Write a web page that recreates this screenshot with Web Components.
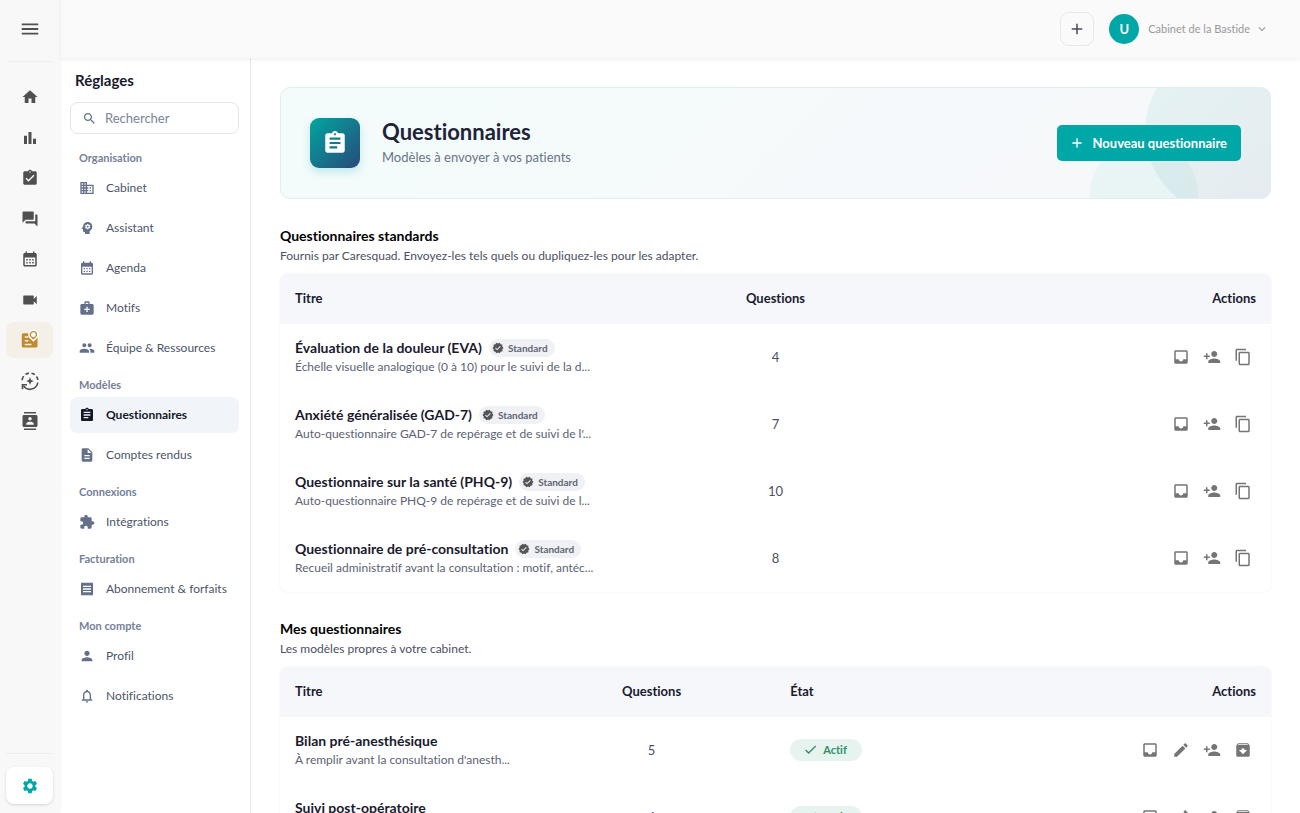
<!DOCTYPE html>
<html lang="fr">
<head>
<meta charset="utf-8">
<meta name="viewport" content="width=device-width, initial-scale=1">
<title>Questionnaires</title>
<style>
  html, body {
    margin: 0;
    height: 100%;
  }
  body {
    --teal: #00a7a7;
    --ink: #1a1a2e;
    --muted: #64708a;
    font-family: Lato, "Open Sans", sans-serif;
    font-size: 13px;
    font-variant-ligatures: none;
    line-height: 20px;
    color: var(--ink);
    background: #fff;
    overflow: hidden;
  }
</style>
</head>
<body>
<cs-app>
  <cs-rail slot="rail"></cs-rail>
  <cs-topbar slot="top" initial="U">Cabinet de la Bastide</cs-topbar>
  <cs-settings slot="nav">
    <cs-group label="Organisation">
      <cs-link icon="business">Cabinet</cs-link>
      <cs-link icon="psychology">Assistant</cs-link>
      <cs-link icon="calendar">Agenda</cs-link>
      <cs-link icon="medical">Motifs</cs-link>
      <cs-link icon="people">Équipe &amp; Ressources</cs-link>
    </cs-group>
    <cs-group label="Modèles">
      <cs-link icon="assignment" active>Questionnaires</cs-link>
      <cs-link icon="description">Comptes rendus</cs-link>
    </cs-group>
    <cs-group label="Connexions">
      <cs-link icon="extension">Intégrations</cs-link>
    </cs-group>
    <cs-group label="Facturation">
      <cs-link icon="receipt">Abonnement &amp; forfaits</cs-link>
    </cs-group>
    <cs-group label="Mon compte">
      <cs-link icon="person">Profil</cs-link>
      <cs-link icon="bell">Notifications</cs-link>
    </cs-group>
  </cs-settings>
  <cs-hero icon="assignment" action="Nouveau questionnaire">
    <span slot="title">Questionnaires</span>
    <span slot="subtitle">Modèles à envoyer à vos patients</span>
  </cs-hero>
  <cs-section>
    <span slot="title">Questionnaires standards</span>
    <span slot="subtitle">Fournis par Caresquad. Envoyez-les tels quels ou dupliquez-les pour les adapter.</span>
    <cs-table source="standards"></cs-table>
  </cs-section>
  <cs-section>
    <span slot="title">Mes questionnaires</span>
    <span slot="subtitle">Les modèles propres à votre cabinet.</span>
    <cs-table source="mine"></cs-table>
  </cs-section>
</cs-app>

<script>
const CLIP = "M19 3h-4.18C14.4 1.84 13.3 1 12 1c-1.3 0-2.4.84-2.82 2H5c-1.1 0-2 .9-2 2v14c0 1.1.9 2 2 2h14c1.1 0 2-.9 2-2V5c0-1.1-.9-2-2-2zm-7 0c.55 0 1 .45 1 1s-.45 1-1 1-1-.45-1-1 .45-1 1-1z";

const PATHS = {
  menu: "M3 18h18v-2H3v2zm0-5h18v-2H3v2zm0-7v2h18V6H3z",
  home: "M10 20v-6h4v6h5v-8h3L12 3 2 12h3v8z",
  chart: "M4 9h4v11H4zm12 4h4v7h-4zm-6-9h4v16h-4z",
  task: CLIP + "m-2 14l-4-4 1.41-1.41L10 14.17l6.59-6.59L18 9l-8 8z",
  assignment: CLIP + "m2 14H7v-2h7v2zm3-4H7v-2h10v2zm0-4H7V7h10v2z",
  forum: "M21 6h-2v9H6v2c0 .55.45 1 1 1h11l4 4V7c0-.55-.45-1-1-1zm-4 6V3c0-.55-.45-1-1-1H3c-.55 0-1 .45-1 1v14l4-4h10c.55 0 1-.45 1-1z",
  calendar: "M19 4h-1V2h-2v2H8V2H6v2H5c-1.11 0-1.99.9-1.99 2L3 20c0 1.1.89 2 2 2h14c1.1 0 2-.9 2-2V6c0-1.1-.9-2-2-2zm0 16H5V10h14v10zM9 14H7v-2h2v2zm4 0h-2v-2h2v2zm4 0h-2v-2h2v2zm-8 4H7v-2h2v2zm4 0h-2v-2h2v2zm4 0h-2v-2h2v2z",
  video: "M17 10.5V7c0-.55-.45-1-1-1H4c-.55 0-1 .45-1 1v10c0 .55.45 1 1 1h12c.55 0 1-.45 1-1v-3.5l4 4v-11l-4 4z",
  contacts: "M20 0H4v2h16V0zM4 24h16v-2H4v2zM20 4H4c-1.1 0-2 .9-2 2v12c0 1.1.9 2 2 2h16c1.1 0 2-.9 2-2V6c0-1.1-.9-2-2-2zm-8 2.75c1.24 0 2.25 1.01 2.25 2.25s-1.01 2.25-2.25 2.25S9.75 10.24 9.75 9 10.76 6.75 12 6.75zM17 17H7v-1.5c0-1.67 3.33-2.5 5-2.5s5 .83 5 2.5V17z",
  gear: "M19.14 12.94c.04-.3.06-.61.06-.94 0-.32-.02-.64-.07-.94l2.03-1.58c.18-.14.23-.41.12-.61l-1.92-3.32c-.12-.22-.37-.29-.59-.22l-2.39.96c-.5-.38-1.03-.7-1.62-.94l-.36-2.54c-.04-.24-.24-.41-.48-.41h-3.84c-.24 0-.43.17-.47.41l-.36 2.54c-.59.24-1.13.57-1.62.94l-2.39-.96c-.22-.08-.47 0-.59.22L2.74 8.87c-.12.21-.08.47.12.61l2.03 1.58c-.05.3-.09.63-.09.94s.02.64.07.94l-2.03 1.58c-.18.14-.23.41-.12.61l1.92 3.32c.12.22.37.29.59.22l2.39-.96c.5.38 1.03.7 1.62.94l.36 2.54c.05.24.24.41.48.41h3.84c.24 0 .44-.17.47-.41l.36-2.54c.59-.24 1.13-.56 1.62-.94l2.39.96c.22.08.47 0 .59-.22l1.92-3.32c.12-.22.07-.47-.12-.61l-2.01-1.58zM12 15.6c-1.98 0-3.6-1.62-3.6-3.6s1.62-3.6 3.6-3.6 3.6 1.62 3.6 3.6-1.62 3.6-3.6 3.6z",
  business: "M12 7V3H2v18h20V7H12zM6 19H4v-2h2v2zm0-4H4v-2h2v2zm0-4H4V9h2v2zm0-4H4V5h2v2zm4 12H8v-2h2v2zm0-4H8v-2h2v2zm0-4H8V9h2v2zm0-4H8V5h2v2zm10 12h-8v-2h2v-2h-2v-2h2v-2h-2V9h8v10zm-2-8h-2v2h2v-2zm0 4h-2v2h2v-2z",
  psychology: "M13 8.57c-.79 0-1.43.64-1.43 1.43s.64 1.43 1.43 1.43 1.43-.64 1.43-1.43-.64-1.43-1.43-1.43zM13 3C9.25 3 6.2 5.94 6.02 9.64L4.1 12.2c-.25.33-.01.8.4.8H6v3c0 1.1.9 2 2 2h1v3h7v-4.68c2.36-1.12 4-3.53 4-6.32 0-3.87-3.13-7-7-7zm3 7c0 .13-.01.26-.02.39l.83.66c.08.06.1.16.05.25l-.8 1.39c-.05.09-.16.12-.24.09l-.99-.4c-.21.16-.43.29-.67.39L14 13.83c-.01.1-.1.17-.2.17h-1.6c-.1 0-.18-.07-.2-.17l-.15-1.06c-.25-.1-.47-.23-.68-.39l-.99.4c-.09.03-.2 0-.25-.09l-.8-1.39c-.05-.08-.03-.19.05-.25l.84-.66c-.01-.13-.02-.26-.02-.39s.02-.27.04-.39l-.85-.66c-.08-.06-.1-.16-.05-.26l.8-1.38c.05-.09.15-.12.24-.09l1 .4c.2-.15.43-.29.67-.39L12 6.17c.02-.1.1-.17.2-.17h1.6c.1 0 .18.07.2.17l.15 1.06c.24.1.46.23.67.39l1-.4c.09-.03.2 0 .24.09l.8 1.38c.05.09.03.2-.05.26l-.85.66c.03.12.04.25.04.39z",
  medical: "M20 6h-4V4c0-1.1-.9-2-2-2h-4c-1.1 0-2 .9-2 2v2H4c-1.1 0-2 .9-2 2v12c0 1.1.9 2 2 2h16c1.1 0 2-.9 2-2V8c0-1.1-.9-2-2-2zM10 4h4v2h-4V4zm6 11h-3v3h-2v-3H8v-2h3v-3h2v3h3v2z",
  people: "M16 11c1.66 0 2.99-1.34 2.99-3S17.66 5 16 5c-1.66 0-3 1.34-3 3s1.34 3 3 3zm-8 0c1.66 0 2.99-1.34 2.99-3S9.66 5 8 5C6.34 5 5 6.34 5 8s1.34 3 3 3zm0 2c-2.33 0-7 1.17-7 3.5V19h14v-2.5c0-2.33-4.67-3.5-7-3.5zm8 0c-.29 0-.62.02-.97.05 1.16.84 1.97 1.97 1.97 3.45V19h6v-2.5c0-2.33-4.67-3.5-7-3.5z",
  description: "M14 2H6c-1.1 0-1.99.9-1.99 2L4 20c0 1.1.89 2 1.99 2H18c1.1 0 2-.9 2-2V8l-6-6zm2 16H8v-2h8v2zm0-4H8v-2h8v2zm-3-5V3.5L18.5 9H13z",
  extension: "M20.5 11H19V7c0-1.1-.9-2-2-2h-4V3.5C13 2.12 11.88 1 10.5 1S8 2.12 8 3.5V5H4c-1.1 0-1.99.9-1.99 2v3.8H3.5c1.49 0 2.7 1.21 2.7 2.7s-1.21 2.7-2.7 2.7H2V20c0 1.1.9 2 2 2h3.8v-1.5c0-1.49 1.21-2.7 2.7-2.7 1.49 0 2.7 1.21 2.7 2.7V22H17c1.1 0 2-.9 2-2v-4h1.5c1.38 0 2.5-1.12 2.5-2.5S21.88 11 20.5 11z",
  receipt: "M18 17H6v-2h12v2zm0-4H6v-2h12v2zm0-4H6V7h12v2zM3 22l1.5-1.5L6 22l1.5-1.5L9 22l1.5-1.5L12 22l1.5-1.5L15 22l1.5-1.5L18 22l1.5-1.5L21 22V2l-1.5 1.5L18 2l-1.5 1.5L15 2l-1.5 1.5L12 2l-1.5 1.5L9 2 7.5 3.5 6 2 4.5 3.5 3 2v20z",
  person: "M12 12c2.21 0 4-1.79 4-4s-1.79-4-4-4-4 1.79-4 4 1.79 4 4 4zm0 2c-2.67 0-8 1.34-8 4v2h16v-2c0-2.66-5.33-4-8-4z",
  bell: "M12 22c1.1 0 2-.9 2-2h-4c0 1.1.89 2 2 2zm6-6v-5c0-3.07-1.64-5.64-4.5-6.32V4c0-.83-.67-1.5-1.5-1.5s-1.5.67-1.5 1.5v.68C7.63 5.36 6 7.92 6 11v5l-2 2v1h16v-1l-2-2zm-2 1H8v-6c0-2.48 1.51-4.5 4-4.5s4 2.02 4 4.5v6z",
  search: "M15.5 14h-.79l-.28-.27C15.41 12.59 16 11.11 16 9.5 16 5.91 13.09 3 9.5 3S3 5.91 3 9.5 5.91 16 9.5 16c1.61 0 3.09-.59 4.23-1.57l.27.28v.79l5 4.99L20.49 19l-4.99-5zm-6 0C7.01 14 5 11.99 5 9.5S7.01 5 9.5 5 14 7.01 14 9.5 11.99 14 9.5 14z",
  plus: "M19 13h-6v6h-2v-6H5v-2h6V5h2v6h6v2z",
  chevron: "M7.41 8.59 12 13.17l4.59-4.58L18 10l-6 6-6-6z",
  check: "M9 16.17 4.83 12l-1.42 1.41L9 19 21 7l-1.41-1.41z",
  inbox: "M19 3H4.99C3.88 3 3 3.9 3 5l.01 14c0 1.1.88 2 1.98 2H19c1.1 0 2-.9 2-2V5c0-1.1-.9-2-2-2zm0 12h-4c0 1.66-1.34 3-3 3s-3-1.34-3-3H4.99V5H19v10z",
  addPerson: "M15 12c2.21 0 4-1.79 4-4s-1.79-4-4-4-4 1.79-4 4 1.79 4 4 4zm-9-2V7H4v3H1v2h3v3h2v-3h3v-2H6zm9 4c-2.67 0-8 1.34-8 4v2h16v-2c0-2.66-5.33-4-8-4z",
  copy: "M16 1H4c-1.1 0-2 .9-2 2v14h2V3h12V1zm3 4H8c-1.1 0-2 .9-2 2v14c0 1.1.9 2 2 2h11c1.1 0 2-.9 2-2V7c0-1.1-.9-2-2-2zm0 16H8V7h11v14z",
  edit: "M3 17.25V21h3.75L17.81 9.94l-3.75-3.75L3 17.25zM20.71 7.04c.39-.39.39-1.02 0-1.41l-2.34-2.34c-.39-.39-1.02-.39-1.41 0l-1.83 1.83 3.75 3.75 1.83-1.83z",
  archive: "M20.54 5.23l-1.39-1.68C18.88 3.21 18.47 3 18 3H6c-.47 0-.88.21-1.16.55L3.46 5.23C3.17 5.57 3 6.02 3 6.5V19c0 1.1.9 2 2 2h14c1.1 0 2-.9 2-2V6.5c0-.48-.17-.93-.46-1.27zM12 17.5L6.5 12H10v-2h4v2h3.5L12 17.5zM5.12 5l.81-1h12l.94 1H5.12z",
  verified: "M23 12l-2.44-2.79.34-3.69-3.61-.82-1.89-3.2L12 2.96 8.6 1.5 6.71 4.69 3.1 5.5l.34 3.7L1 12l2.44 2.79-.34 3.7 3.61.82L8.6 22.5l3.4-1.47 3.4 1.46 1.89-3.19 3.61-.82-.34-3.69L23 12zm-12.91 4.72l-3.8-3.81 1.48-1.48 2.32 2.33 5.85-5.87 1.48 1.48-7.33 7.35z"
};

// icons that need more than one filled path
const DRAWINGS = {
  listPin: `
    <rect x="1" y="3" width="21" height="19" rx="2"/>
    <path d="M5 8h5M5 13h5M5 18h9" stroke="#f4f0e8" stroke-width="2"/>
    <path d="M16.5-1a6 6 0 0 1 6 6c0 4-3.5 5-6 8-2.500-3-6-4-6-8a6 6 0 0 1 6-6z" stroke="#fff" stroke-width="2"/>
    <circle cx="16.5" cy="5" r="3.2" fill="#fff"/>`,
  cycle: `
    <g fill="none" stroke="currentColor" stroke-width="2.2">
      <path d="M1.5 11a10.5 10.5 0 0 1 2-5.5M6 3.2a10.5 10.5 0 0 1 4.5-1.7M14 1.6a10.5 10.5 0 0 1 4.5 2M20.7 6a10.5 10.5 0 0 1 1.8 4.5M22.4 14a10.5 10.5 0 0 1-19 4.5"/>
      <path d="M2 23v-6h6"/>
    </g>
    <path d="M12 7l1.5 3.5L17 12l-3.5 1.5L12 17l-1.5-3.5L7 12l3.5-1.5z"/>`
};

class CsElement extends HTMLElement {
  constructor() {
    super();
    this.attachShadow({ mode: "open" });
  }
  connectedCallback() {
    const template = document.createElement("template");
    template.innerHTML = `<style>${this.getStyles()}</style>${this.getTemplate()}`;
    this.shadowRoot.replaceChildren(template.content.cloneNode(true));
  }
}

class CsIcon extends CsElement {
  getStyles() {
    return `
      :host { display: block; flex: none; width: var(--size, 18px); height: var(--size, 18px); }
      svg { display: block; width: 100%; height: 100%; fill: currentColor; overflow: visible; }
    `;
  }
  getTemplate() {
    const name = this.getAttribute("name");
    const body = DRAWINGS[name] || `<path d="${PATHS[name]}"/>`;
    return `<svg viewBox="0 0 24 24" aria-hidden="true">${body}</svg>`;
  }
}

class CsApp extends CsElement {
  getStyles() {
    return `
      :host {
        display: grid;
        grid-template: 58px minmax(0, 1fr) / 59px 192px minmax(0, 1fr);
        grid-template-areas: "rail top top" "rail nav main";
        height: 100vh;
      }
      slot[name=rail] { display: block; grid-area: rail; z-index: 2; box-shadow: 0 0 5px rgba(0,0,0,.08); }
      slot[name=top] { display: block; grid-area: top; z-index: 1; box-shadow: 0 1px 5px rgba(0,0,0,.08); }
      slot[name=nav] { display: block; grid-area: nav; border-right: 1px solid #e4e6ea; overflow: hidden; }
      main { grid-area: main; overflow: hidden; padding: 29px 29px 0; }
    `;
  }
  getTemplate() {
    return `
      <slot name="rail"></slot>
      <slot name="top"></slot>
      <slot name="nav"></slot>
      <main><slot></slot></main>
    `;
  }
}

class CsRail extends CsElement {
  getStyles() {
    return `
      :host { display: flex; flex-direction: column; height: 100%; box-sizing: border-box; padding: 0 6px; background: #f8f8f8; color: #505050; }
      button, a { display: grid; place-items: center; width: 47px; height: 36px; padding: 0; border: 0; border-radius: 8px; background: none; color: inherit; }
      .menu { height: 58px; --size: 22px; }
      nav { display: flex; flex-direction: column; justify-content: space-between; height: 360px; margin-top: 3px; padding-top: 17px; border-top: 1px solid #f0f0f0; }
      .here { background: #f4f0e8; color: #c08a30; }
      .foot { margin-top: auto; padding: 13px 0 9px; border-top: 1px solid #ececec; }
      .foot a { height: 37px; background: #fff; color: var(--teal); box-shadow: 0 1px 3px rgba(0,0,0,.14); }
    `;
  }
  getTemplate() {
    const items = [
      ["home", "Accueil"], ["chart", "Statistiques"], ["task", "Tâches"],
      ["forum", "Messages"], ["calendar", "Agenda"], ["video", "Vidéo"],
      ["listPin", "Parcours"], ["cycle", "Suivi"], ["contacts", "Patients"]
    ];
    return `
      <button class="menu" aria-label="Menu"><cs-icon name="menu"></cs-icon></button>
      <nav>
        ${items.map(([icon, label]) => `
          <a href="#" aria-label="${label}" class="${icon === "listPin" ? "here" : ""}"><cs-icon name="${icon}"></cs-icon></a>
        `).join("")}
      </nav>
      <div class="foot"><a href="#" aria-label="Réglages"><cs-icon name="gear"></cs-icon></a></div>
    `;
  }
}

class CsTopbar extends CsElement {
  getStyles() {
    return `
      :host { display: flex; align-items: center; justify-content: flex-end; height: 58px; box-sizing: border-box; padding-right: 31px; background: #fafafa; }
      button { font: inherit; padding: 0; border: 0; background: none; }
      .add { display: grid; place-items: center; width: 34px; height: 34px; margin-right: 15px; border: 1px solid #e8e8ea; border-radius: 9px; color: #4a4a60; }
      .user { display: flex; align-items: center; font-size: 11px; color: #999; --size: 14px; }
      .avatar { width: 30px; border-radius: 50%; margin-right: 9px; background: var(--teal); color: #fff; font-size: 13px; font-weight: 700; line-height: 30px; text-align: center; }
      .user cs-icon { margin-left: 5px; }
    `;
  }
  getTemplate() {
    return `
      <button class="add" aria-label="Ajouter"><cs-icon name="plus"></cs-icon></button>
      <button class="user">
        <span class="avatar">${this.getAttribute("initial")}</span>
        <slot></slot>
        <cs-icon name="chevron"></cs-icon>
      </button>
    `;
  }
}

class CsSettings extends CsElement {
  getStyles() {
    return `
      :host { display: block; padding: 12px 11px 0; }
      h2 { margin: 0 5px 12px; font-size: 15px; line-height: 20px; font-weight: 700; }
      label { display: flex; align-items: center; gap: 8px; height: 30px; margin-bottom: 5px; padding: 0 11px; border: 1px solid #e2e5ea; border-radius: 8px; color: var(--muted); --size: 15px; }
      input { flex: 1; min-width: 0; padding: 0; border: 0; outline: 0; font: inherit; background: none; color: inherit; }
      input::placeholder { color: #7a8599; opacity: 1; }
    `;
  }
  getTemplate() {
    return `
      <h2>Réglages</h2>
      <label><cs-icon name="search"></cs-icon><input type="search" placeholder="Rechercher" aria-label="Rechercher"></label>
      <slot></slot>
    `;
  }
}

class CsGroup extends CsElement {
  getStyles() {
    return `
      :host { display: block; }
      h3 { margin: 0; padding: 13px 9px 6px; font-size: 11px; line-height: 12px; font-weight: 700; color: #75809a; }
      div { display: grid; gap: 4px; }
    `;
  }
  getTemplate() {
    return `<h3>${this.getAttribute("label")}</h3><div><slot></slot></div>`;
  }
}

class CsLink extends CsElement {
  getStyles() {
    return `
      :host { display: block; color: #4b5568; font-size: 12px; }
      a { display: flex; align-items: center; gap: 11px; height: 36px; padding: 0 9px; border-radius: 7px; color: inherit; text-decoration: none; white-space: nowrap; --size: 16px; }
      cs-icon { color: var(--muted); }
      :host([active]) a { background: #f1f5fa; color: #141827; font-weight: 700; }
      :host([active]) cs-icon { color: #141827; }
    `;
  }
  getTemplate() {
    return `<a href="#"><cs-icon name="${this.getAttribute("icon")}"></cs-icon><slot></slot></a>`;
  }
}

class CsHero extends CsElement {
  getStyles() {
    return `
      :host {
        display: flex; align-items: center; position: relative; overflow: hidden;
        padding: 30px 29px; border: 1px solid #e2edf0; border-radius: 10px;
        background: linear-gradient(135deg, #f3fcfb, #f6f9fb 60%, #f6f8fa);
      }
      .tile { display: grid; place-items: center; width: 50px; height: 50px; margin-right: 22px; border-radius: 9px; color: #fff; background: linear-gradient(135deg, #00a7a0, #29497a); box-shadow: 0 4px 10px rgba(0,167,167,.22); --size: 26px; }
      .text { flex: 1; position: relative; }
      h1 { margin: 0; font-size: 22px; line-height: 28px; font-weight: 700; color: #1e2338; }
      p { margin: 0; line-height: 22px; color: #6b7488; }
      button { display: flex; align-items: center; gap: 8px; position: relative; height: 36px; padding: 0 14px 0 12px; border: 0; border-radius: 5px; background: var(--teal); color: #fff; font: inherit; font-weight: 700; --size: 16px; }
      .disc { position: absolute; border-radius: 50%; }
      .big { width: 170px; height: 170px; right: -45px; top: -42px; background: linear-gradient(135deg, rgba(0,167,150,.07), rgba(41,73,122,.08)); }
      .small { width: 108px; height: 108px; right: 72px; bottom: -50px; background: rgba(0,167,150,.05); }
    `;
  }
  getTemplate() {
    return `
      <span class="disc big"></span>
      <span class="disc small"></span>
      <span class="tile"><cs-icon name="${this.getAttribute("icon")}"></cs-icon></span>
      <div class="text">
        <h1><slot name="title"></slot></h1>
        <p><slot name="subtitle"></slot></p>
      </div>
      <button><cs-icon name="plus"></cs-icon>${this.getAttribute("action")}</button>
    `;
  }
}

class CsSection extends CsElement {
  getStyles() {
    return `
      :host { display: block; margin-top: 27px; }
      h2 { margin: 0; font-size: 14px; line-height: 20px; font-weight: 700; color: #000; }
      p { margin: 0 0 8px; font-size: 12px; line-height: 20px; color: #4b5063; }
    `;
  }
  getTemplate() {
    return `
      <h2><slot name="title"></slot></h2>
      <p><slot name="subtitle"></slot></p>
      <slot></slot>
    `;
  }
}

class CsPill extends CsElement {
  getStyles() {
    return `
      :host { display: inline-flex; align-items: center; gap: 4px; height: 18px; padding: 0 7px 0 3px; border-radius: 9px; background: #eff1f4; color: #5f6675; font-size: 10px; font-weight: 700; --size: 12px; }
      cs-icon { color: #555; }
      :host([kind=active]) { gap: 5px; height: 22px; padding: 0 15px 0 13px; border-radius: 11px; background: #e6f3ef; color: #2f9067; font-size: 11px; --size: 15px; }
      :host([kind=active]) cs-icon { color: inherit; }
    `;
  }
  getTemplate() {
    const icon = this.getAttribute("kind") === "active" ? "check" : "verified";
    return `<cs-icon name="${icon}"></cs-icon><slot></slot>`;
  }
}

const ACTIONS = {
  inbox: "Réponses",
  edit: "Modifier",
  addPerson: "Envoyer",
  copy: "Dupliquer",
  archive: "Archiver"
};

const TABLES = {
  standards: {
    state: false,
    actions: ["inbox", "addPerson", "copy"],
    rows: [
      ["Évaluation de la douleur (EVA)", "Échelle visuelle analogique (0 à 10) pour le suivi de la d...", 4],
      ["Anxiété généralisée (GAD-7)", "Auto-questionnaire GAD-7 de repérage et de suivi de l'...", 7],
      ["Questionnaire sur la santé (PHQ-9)", "Auto-questionnaire PHQ-9 de repérage et de suivi de l...", 10],
      ["Questionnaire de pré-consultation", "Recueil administratif avant la consultation : motif, antéc...", 8]
    ]
  },
  mine: {
    state: true,
    actions: ["inbox", "edit", "addPerson", "archive"],
    rows: [
      ["Bilan pré-anesthésique", "À remplir avant la consultation d'anesth...", 5],
      ["Suivi post-opératoire", "", 4]
    ]
  }
};

class CsTable extends CsElement {
  getStyles() {
    return `
      :host { display: block; border-radius: 8px; overflow: hidden; box-shadow: 0 0 2px rgba(30,40,80,.1); }
      table { width: 100%; border-collapse: collapse; table-layout: fixed; }
      th, td { box-sizing: border-box; padding: 0 15px 2px; }
      th { height: 50px; background: #f5f7fb; text-align: left; font-weight: 700; }
      td { height: 67px; }
      .count { text-align: center; color: #4b5063; }
      th.count { color: inherit; }
      .title { display: flex; align-items: center; gap: 7px; font-size: 14px; line-height: 20px; font-weight: 700; white-space: nowrap; }
      .about { height: 18px; font-size: 12px; line-height: 18px; color: #5c6274; white-space: nowrap; }
      .right { text-align: right; }
      .actions { display: flex; justify-content: flex-end; gap: 13px; padding-right: 4px; }
      button { padding: 0; border: 0; background: none; color: #757575; }
      cs-pill { vertical-align: middle; }
      .col-title { width: 40%; } .col-count { width: 20%; }
      .state .col-title { width: 33%; } .state .col-count { width: 9%; } .state .col-state { width: 34%; }
      .state td:nth-child(3), .state th:nth-child(3) { padding-left: 94px; }
    `;
  }
  getTemplate() {
    const { state, actions, rows } = TABLES[this.getAttribute("source")];
    const buttons = actions.map(name => `
      <button aria-label="${ACTIONS[name]}"><cs-icon name="${name}"></cs-icon></button>
    `).join("");
    return `
      <table class="${state ? "state" : ""}">
        <colgroup>
          <col class="col-title"><col class="col-count">${state ? `<col class="col-state">` : ""}<col>
        </colgroup>
        <thead>
          <tr>
            <th>Titre</th>
            <th class="count">Questions</th>
            ${state ? "<th>État</th>" : ""}
            <th class="right">Actions</th>
          </tr>
        </thead>
        <tbody>
          ${rows.map(([title, about, count]) => `
            <tr>
              <td>
                <div class="title">${title}${state ? "" : "<cs-pill>Standard</cs-pill>"}</div>
                <div class="about">${about}</div>
              </td>
              <td class="count">${count}</td>
              ${state ? `<td><cs-pill kind="active">Actif</cs-pill></td>` : ""}
              <td><div class="actions">${buttons}</div></td>
            </tr>
          `).join("")}
        </tbody>
      </table>
    `;
  }
}

customElements.define("cs-icon", CsIcon);
customElements.define("cs-pill", CsPill);
customElements.define("cs-app", CsApp);
customElements.define("cs-rail", CsRail);
customElements.define("cs-topbar", CsTopbar);
customElements.define("cs-settings", CsSettings);
customElements.define("cs-group", CsGroup);
customElements.define("cs-link", CsLink);
customElements.define("cs-hero", CsHero);
customElements.define("cs-section", CsSection);
customElements.define("cs-table", CsTable);
</script>
</body>
</html>
